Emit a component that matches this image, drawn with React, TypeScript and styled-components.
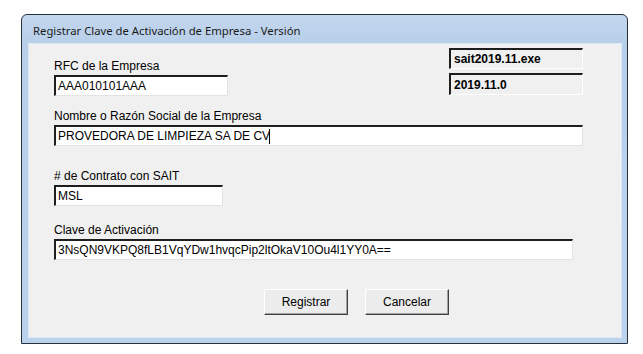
import React from 'react';
import styled, { createGlobalStyle } from 'styled-components';

const Global = createGlobalStyle`
  html, body { margin: 0; padding: 0; background: #ffffff; }
  body { font-family: "Liberation Sans", Arial, sans-serif; font-size: 12px; color: #000; }
`;

const Window = styled.div`
  margin: 14px 0 0 21px;
  width: 607px;
  height: 330px;
  box-sizing: border-box;
  border: 1px solid #27313c;
  border-radius: 6px 6px 0 0;
  background: linear-gradient(180deg, #c3d7ee 0px, #b8cfe9 29px, #bad2eb 100%);
  display: flex;
  flex-direction: column;
  padding: 0 6px 6px 7px;
`;

const TitleBar = styled.div`
  height: 29px;
  display: flex;
  align-items: center;
  padding-left: 4px;
  font-family: "Noto Sans", "Open Sans", sans-serif;
  font-size: 11.3px;
  color: #1a1a1a;
  padding-top: 1px;
  box-sizing: border-box;
`;

const Client = styled.div`
  flex: 1;
  background: #f0f0f0;
  box-shadow: 0 0 0 1px #dce8f5;
  padding: 4px 38px 0 25px;
  display: flex;
  flex-direction: column;
`;

const TopRow = styled.div`
  display: flex;
  justify-content: space-between;
  align-items: flex-start;
`;

const InfoCol = styled.div`
  display: flex;
  flex-direction: column;
  gap: 4px;
  width: 134px;
`;

const InfoBox = styled.div<{ $h: number }>`
  height: ${p => p.$h}px;
  box-sizing: border-box;
  border-top: 2px solid #1e1e1e;
  border-left: 2px solid #1e1e1e;
  border-right: 1px solid #ffffff;
  border-bottom: 1px solid #ffffff;
  padding-left: 3px;
  display: flex;
  align-items: center;
  font-weight: bold;
  font-size: 12px;
`;

const Field = styled.div<{ $mt: number }>`
  margin-top: ${p => p.$mt}px;
  display: flex;
  flex-direction: column;
  gap: 2px;
`;

const Label = styled.div`
  height: 14px;
  line-height: 14px;
  font-size: 12px;
`;

const TextBox = styled.div<{ $w: number }>`
  width: ${p => p.$w}px;
  height: 21px;
  box-sizing: border-box;
  background: #ffffff;
  border-top: 2px solid #1e1e1e;
  border-left: 2px solid #1e1e1e;
  border-right: 1px solid #e3e3e3;
  border-bottom: 1px solid #e3e3e3;
  padding-left: 2px;
  display: flex;
  align-items: center;
  font-size: 12px;
  white-space: nowrap;
  overflow: hidden;
`;

const Caret = styled.span`
  display: inline-block;
  width: 1px;
  height: 15px;
  background: #000;
  margin-left: -1px;
`;

const ButtonRow = styled.div`
  margin-top: 29px;
  padding-left: 210px;
  display: flex;
  gap: 17px;
`;

const Button = styled.button`
  width: 84px;
  height: 26px;
  box-sizing: border-box;
  background: #ececec;
  border-top: 1px solid #ffffff;
  border-left: 1px solid #ffffff;
  border-right: 1px solid #404040;
  border-bottom: 1px solid #404040;
  box-shadow: inset -1px -1px 0 #a0a0a0;
  font-family: "Liberation Sans", Arial, sans-serif;
  font-size: 12px;
  color: #000;
  padding: 0;
`;

export default function App() {
  return (
    <>
      <Global />
      <Window>
        <TitleBar>Registrar Clave de Activación de Empresa - Versión</TitleBar>
        <Client>
          <TopRow>
            <Field $mt={11}>
              <Label>RFC de la Empresa</Label>
              <TextBox $w={174}>AAA010101AAA</TextBox>
            </Field>
            <InfoCol>
              <InfoBox $h={21}>sait2019.11.exe</InfoBox>
              <InfoBox $h={22}>2019.11.0</InfoBox>
            </InfoCol>
          </TopRow>
          <Field $mt={13}>
            <Label>Nombre o Razón Social de la Empresa</Label>
            <TextBox $w={529}>PROVEDORA DE LIMPIEZA SA DE CV<Caret /></TextBox>
          </Field>
          <Field $mt={23}>
            <Label># de Contrato con SAIT</Label>
            <TextBox $w={169}>MSL</TextBox>
          </Field>
          <Field $mt={17}>
            <Label>Clave de Activación</Label>
            <TextBox $w={519}>3NsQN9VKPQ8fLB1VqYDw1hvqcPip2ltOkaV10Ou4l1YY0A==</TextBox>
          </Field>
          <ButtonRow>
            <Button>Registrar</Button>
            <Button>Cancelar</Button>
          </ButtonRow>
        </Client>
      </Window>
    </>
  );
}
